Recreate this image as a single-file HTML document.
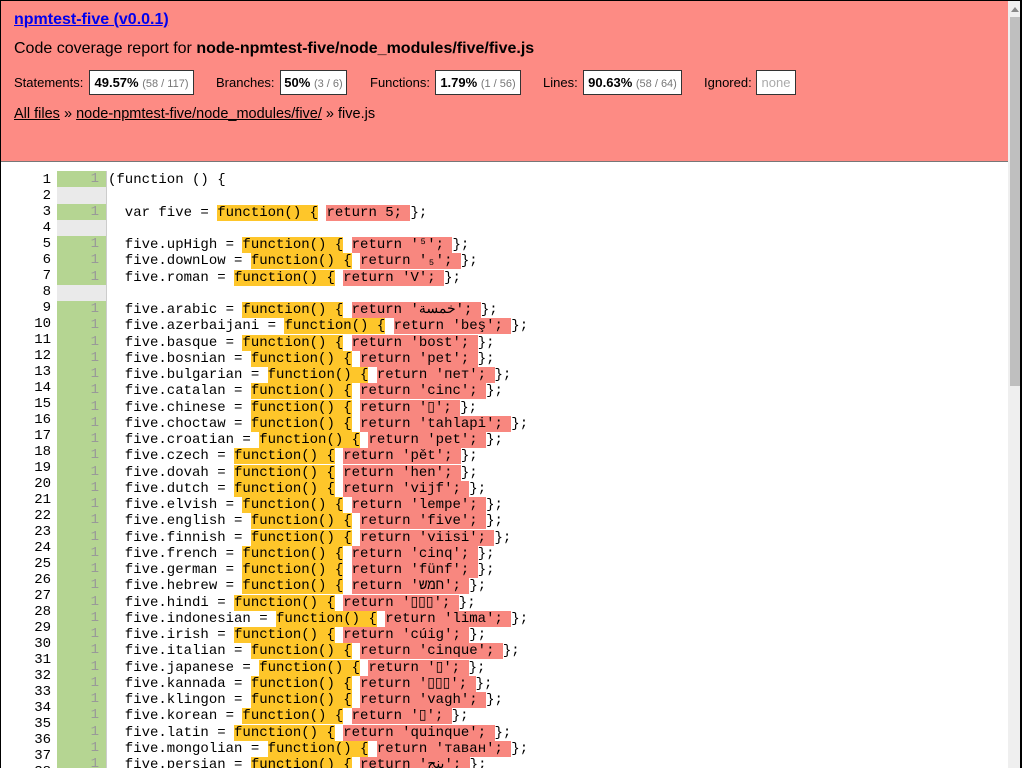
<!DOCTYPE html>
<html><head><meta charset="utf-8">
<style>
html,body{margin:0;padding:0;height:768px;overflow:hidden;}
body{width:1024px;position:relative;background:#fff;font-family:"Liberation Sans",Arial,sans-serif;color:#000;}
.frame{position:absolute;left:0;top:0;width:1022px;height:768px;border-top:1px solid #000;border-left:1px solid #000;border-right:2px solid #000;box-sizing:border-box;z-index:5;pointer-events:none;}
.hdr{position:absolute;left:1px;top:1px;width:1007px;height:161px;background:#fd8b84;border-bottom:1px solid #777;box-sizing:border-box;}
.title{position:absolute;left:13px;top:10px;font-size:16px;font-weight:bold;color:#00e;text-decoration:underline;}
.sub{position:absolute;left:13px;top:39px;font-size:16px;}
.lbl{position:absolute;top:74px;font-size:13px;white-space:nowrap;}
.box{position:absolute;top:69px;height:25px;box-sizing:border-box;background:#fff;border:1px solid #333;font-size:13px;line-height:23px;text-align:center;white-space:nowrap;}
.box b{font-weight:bold;}
.box span{color:#777;font-size:11px;}
.crumb{position:absolute;left:13px;top:105px;font-size:14.5px;}
.crumb a{color:#000;text-decoration:underline;}
.scroll{position:absolute;left:1008px;top:1px;width:14px;height:767px;background:#efefef;}
.thumb{position:absolute;left:2px;top:16px;width:11px;height:369px;background:#bfbfbf;}
.arrow{position:absolute;left:3px;top:6px;width:0;height:0;border-left:4px solid transparent;border-right:4px solid transparent;border-bottom:5px solid #888;}
.nums{position:absolute;left:1px;top:172px;width:50px;text-align:right;white-space:pre;font-family:"Liberation Mono",monospace;font-size:14px;line-height:16px;}
.cvs{position:absolute;left:57px;top:171px;width:50px;}
.cv{height:16.25px;background:#b5d592;text-align:right;color:#999;box-sizing:border-box;padding-right:7px;border-right:1px solid #ccc;font-family:"Liberation Mono",monospace;font-size:14px;line-height:16.25px;}
.cv.e{background:#eaeaea;}
.src{position:absolute;left:108px;top:172px;white-space:pre;font-family:"Liberation Mono","Noto Sans CJK JP",monospace;font-size:14px;line-height:16.25px;}
.f{background:#fec62a;}
.r{background:#f8877f;}
.bidi{unicode-bidi:isolate;}
</style></head><body>
<div class="frame"></div>
<div class="hdr">
<div class="title">npmtest-five (v0.0.1)</div>
<div class="sub">Code coverage report for <b>node-npmtest-five/node_modules/five/five.js</b></div>
<div class="lbl" style="left:13px">Statements:</div>
<div class="box" style="left:88px;width:105px"><b>49.57%</b> <span>(58 / 117)</span></div>
<div class="lbl" style="left:215px">Branches:</div>
<div class="box" style="left:279px;width:67px"><b>50%</b> <span>(3 / 6)</span></div>
<div class="lbl" style="left:369px">Functions:</div>
<div class="box" style="left:434px;width:86px"><b>1.79%</b> <span>(1 / 56)</span></div>
<div class="lbl" style="left:542px">Lines:</div>
<div class="box" style="left:582px;width:99px"><b>90.63%</b> <span>(58 / 64)</span></div>
<div class="lbl" style="left:703px">Ignored:</div>
<div class="box" style="left:755px;width:40px;color:#aaa">none</div>
<div class="crumb"><a>All files</a> » <a>node-npmtest-five/node_modules/five/</a> » five.js</div>
</div>
<div class="scroll"><div class="arrow"></div><div class="thumb"></div></div>
<div class="nums">1
2
3
4
5
6
7
8
9
10
11
12
13
14
15
16
17
18
19
20
21
22
23
24
25
26
27
28
29
30
31
32
33
34
35
36
37
38</div>
<div class="cvs">
<div class="cv">1</div><div class="cv e"></div><div class="cv">1</div><div class="cv e"></div>
<div class="cv">1</div><div class="cv">1</div><div class="cv">1</div><div class="cv e"></div>
<div class="cv">1</div><div class="cv">1</div><div class="cv">1</div><div class="cv">1</div><div class="cv">1</div>
<div class="cv">1</div><div class="cv">1</div><div class="cv">1</div><div class="cv">1</div><div class="cv">1</div>
<div class="cv">1</div><div class="cv">1</div><div class="cv">1</div><div class="cv">1</div><div class="cv">1</div>
<div class="cv">1</div><div class="cv">1</div><div class="cv">1</div><div class="cv">1</div><div class="cv">1</div>
<div class="cv">1</div><div class="cv">1</div><div class="cv">1</div><div class="cv">1</div><div class="cv">1</div>
<div class="cv">1</div><div class="cv">1</div><div class="cv">1</div><div class="cv">1</div><div class="cv">1</div>
</div>
<div class="src">(function () {

  var five = <span class="f">function() {</span> <span class="r">return 5; </span>};

  five.upHigh = <span class="f">function() {</span> <span class="r">return '⁵'; </span>};
  five.downLow = <span class="f">function() {</span> <span class="r">return '₅'; </span>};
  five.roman = <span class="f">function() {</span> <span class="r">return 'V'; </span>};

  five.arabic = <span class="f">function() {</span> <span class="r">return '<span class="bidi">خمسة</span>'; </span>};
  five.azerbaijani = <span class="f">function() {</span> <span class="r">return 'beş'; </span>};
  five.basque = <span class="f">function() {</span> <span class="r">return 'bost'; </span>};
  five.bosnian = <span class="f">function() {</span> <span class="r">return 'pet'; </span>};
  five.bulgarian = <span class="f">function() {</span> <span class="r">return 'пет'; </span>};
  five.catalan = <span class="f">function() {</span> <span class="r">return 'cinc'; </span>};
  five.chinese = <span class="f">function() {</span> <span class="r">return '▯'; </span>};
  five.choctaw = <span class="f">function() {</span> <span class="r">return 'tahlapi'; </span>};
  five.croatian = <span class="f">function() {</span> <span class="r">return 'pet'; </span>};
  five.czech = <span class="f">function() {</span> <span class="r">return 'pět'; </span>};
  five.dovah = <span class="f">function() {</span> <span class="r">return 'hen'; </span>};
  five.dutch = <span class="f">function() {</span> <span class="r">return 'vijf'; </span>};
  five.elvish = <span class="f">function() {</span> <span class="r">return 'lempe'; </span>};
  five.english = <span class="f">function() {</span> <span class="r">return 'five'; </span>};
  five.finnish = <span class="f">function() {</span> <span class="r">return 'viisi'; </span>};
  five.french = <span class="f">function() {</span> <span class="r">return 'cinq'; </span>};
  five.german = <span class="f">function() {</span> <span class="r">return 'fünf'; </span>};
  five.hebrew = <span class="f">function() {</span> <span class="r">return '<span class="bidi">חמש</span>'; </span>};
  five.hindi = <span class="f">function() {</span> <span class="r">return '▯▯▯'; </span>};
  five.indonesian = <span class="f">function() {</span> <span class="r">return 'lima'; </span>};
  five.irish = <span class="f">function() {</span> <span class="r">return 'cúig'; </span>};
  five.italian = <span class="f">function() {</span> <span class="r">return 'cinque'; </span>};
  five.japanese = <span class="f">function() {</span> <span class="r">return '▯'; </span>};
  five.kannada = <span class="f">function() {</span> <span class="r">return '▯▯▯'; </span>};
  five.klingon = <span class="f">function() {</span> <span class="r">return 'vagh'; </span>};
  five.korean = <span class="f">function() {</span> <span class="r">return '▯'; </span>};
  five.latin = <span class="f">function() {</span> <span class="r">return 'quinque'; </span>};
  five.mongolian = <span class="f">function() {</span> <span class="r">return 'таван'; </span>};
  five.persian = <span class="f">function() {</span> <span class="r">return '<span class="bidi">پنج</span>'; </span>};
  five.polish = <span class="f">function() {</span> <span class="r">return 'pięć'; </span>};</div>
</body></html>
